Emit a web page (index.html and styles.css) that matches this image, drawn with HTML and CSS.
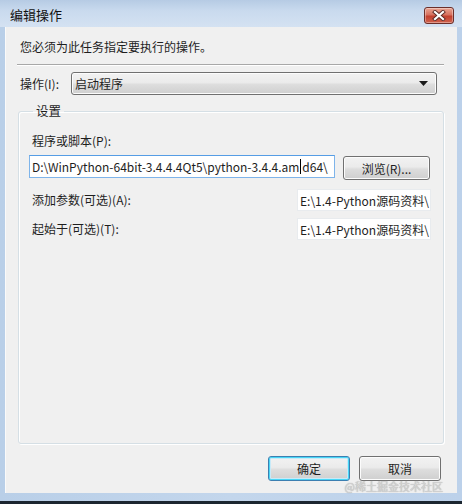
FILE: index.html
```html
<!DOCTYPE html>
<html lang="zh-CN">
<head>
<meta charset="utf-8">
<title>编辑操作</title>
<link rel="stylesheet" href="styles.css">
</head>
<body>
<div class="window">
  <div class="titlebar">
    <span class="title">编辑操作</span>
    <button class="close" aria-label="关闭">
      <svg width="14" height="11" viewBox="0 0 14 11">
        <path d="M3 2 L11 9 M11 2 L3 9" stroke="#5a2a26" stroke-width="4" stroke-linecap="square"/>
        <path d="M3 2 L11 9 M11 2 L3 9" stroke="#ffffff" stroke-width="2.2" stroke-linecap="square"/>
      </svg>
    </button>
  </div>
  <div class="client">
    <p class="intro">您必须为此任务指定要执行的操作。</p>
    <div class="sep"></div>
    <div class="op-row">
      <span class="op-label">操作(I):</span>
      <div class="select">
        <span>启动程序</span>
        <svg width="9" height="5" viewBox="0 0 9 5"><path d="M0 0 H9 L4.5 5 Z" fill="#1a1a1a"/></svg>
      </div>
    </div>
    <fieldset class="group">
      <legend>设置</legend>
      <div class="group-body">
        <div class="field-label">程序或脚本(P):</div>
        <div class="prog-row">
          <div class="input wide"><span>D:\WinPython-64bit-3.4.4.4Qt5\python-3.4.4.am</span><span class="caret"></span><span>d64\</span></div>
          <button class="btn browse">浏览(R)...</button>
        </div>
        <div class="arg-row first">
          <span class="field-label inline">添加参数(可选)(A):</span>
          <div class="input small">E:\1.4-Python源码资料\</div>
        </div>
        <div class="arg-row">
          <span class="field-label inline">起始于(可选)(T):</span>
          <div class="input small">E:\1.4-Python源码资料\</div>
        </div>
      </div>
    </fieldset>
    <div class="buttons">
      <button class="btn default">确定</button>
      <button class="btn">取消</button>
      <span class="watermark">@稀土掘金技术社区</span>
    </div>
  </div>
  <div class="taskbar"></div>
</div>
</body>
</html>
```
FILE: styles.css
```css
* { box-sizing: border-box; }
html, body {
  margin: 0;
  padding: 0;
}
body {
  width: 462px;
  height: 504px;
  overflow: hidden;
  background: #bfd3ea;
  font-family: "Noto Sans CJK SC", "Microsoft YaHei", sans-serif;
  font-size: 12px;
  color: #1e1e1e;
}
.window {
  height: 504px;
  display: flex;
  flex-direction: column;
  background: linear-gradient(90deg, #b9cfe8 0, #c3d6ec 50%, #bcd1ea 100%);
}
.titlebar {
  height: 27px;
  flex: none;
  display: flex;
  align-items: flex-start;
  justify-content: space-between;
  padding: 0 8px 0 10px;
  background: linear-gradient(180deg, #b6cbe4 0, #c9daee 40%, #d4e2f2 100%);
}
.title {
  font-size: 13px;
  line-height: 16px;
  margin-top: 7px;
  color: #111;
}
.close {
  margin-top: 7px;
  width: 30px;
  height: 17px;
  padding: 0;
  border: 1px solid #6b2f2a;
  border-radius: 3px;
  background: linear-gradient(180deg, #e9a593 0, #d7715f 45%, #c2402f 55%, #d0634e 100%);
  display: flex;
  align-items: center;
  justify-content: center;
  box-shadow: inset 0 0 0 1px rgba(255,255,255,0.35);
}
.client {
  flex: 1;
  margin: 0 5px 8px;
  background: #f0f0f0;
  display: flex;
  flex-direction: column;
  padding: 12px 13px 12px 12px;
  box-shadow: inset 1px 0 0 #fafafa;
}
.intro {
  margin: 0 0 0 3px;
  line-height: 16px;
}
.sep {
  margin-top: 9px;
  height: 1px;
  background: #a8a8a8;
  box-shadow: 0 1px 0 #ffffff;
}
.op-row {
  margin-top: 7px;
  display: flex;
  align-items: center;
}
.op-label {
  width: 54px;
  padding-left: 3px;
  line-height: 16px;
}
.select {
  width: 366px;
  height: 23px;
  border: 1px solid #707070;
  border-radius: 3px;
  background: linear-gradient(180deg, #f2f2f2 0, #ebebeb 45%, #dddddd 55%, #cfcfcf 100%);
  display: flex;
  align-items: center;
  justify-content: space-between;
  padding: 0 8px 0 3px;
  box-shadow: inset 0 0 0 1px #fcfcfc;
}
.group {
  margin: 8px 0 0 1px;
  flex: 1;
  border: 1px solid #d5dfe5;
  border-radius: 3px;
  box-shadow: inset 1px 1px 0 #ffffff, 1px 1px 0 #ffffff;
  padding: 0 12px 0 10px;
  min-width: 0;
}
.group legend {
  padding: 0 3px;
  margin-left: 4px;
  line-height: 16px;
  font-size: 12.5px;
}
.group-body {
  padding-top: 14px;
}
.field-label {
  padding-left: 3px;
  line-height: 16px;
}
.prog-row {
  margin-top: 6px;
  display: flex;
  align-items: flex-start;
}
.input {
  height: 23px;
  background: #ffffff;
  border: 1px solid #e3e9ef;
  border-top-color: #abadb3;
  padding: 0 2px;
  display: flex;
  align-items: center;
  white-space: nowrap;
  overflow: hidden;
  font-size: 12px;
}
.input.wide {
  width: 306px;
  border-color: #7eb4ea;
  border-top-color: #569de5;
}
.caret {
  flex: none;
  width: 1px;
  height: 15px;
  margin: 0 1px;
  background: #000;
}
.btn {
  font-family: inherit;
  font-size: 12px;
  color: #1e1e1e;
  border: 1px solid #707070;
  border-radius: 3px;
  background: linear-gradient(180deg, #f2f2f2 0, #ebebeb 45%, #dddddd 55%, #cfcfcf 100%);
  box-shadow: inset 0 0 0 1px #fcfcfc;
  padding: 0;
}
.browse {
  margin-left: 8px;
  margin-top: 1px;
  width: 87px;
  height: 24px;
}
.arg-row {
  display: flex;
  justify-content: space-between;
  align-items: center;
  margin-top: 7px;
}
.arg-row.first {
  margin-top: 9px;
}
.input.small {
  width: 134px;
  height: 22px;
  border-color: #e8ebee;
  justify-content: flex-start;
}
.buttons {
  position: relative;
  margin-top: 12px;
  display: flex;
  justify-content: flex-end;
  gap: 9px;
  padding-right: 3px;
}
.buttons .btn {
  width: 82px;
  height: 25px;
}
.btn.default {
  border-color: #3c7fb1;
  box-shadow: inset 0 0 0 1px #48d6f6, inset 0 0 0 2px #c8eaf8;
}
.watermark {
  position: absolute;
  right: 1px;
  top: 24px;
  font-size: 11px;
  line-height: 12px;
  color: #d4d4d4;
  text-shadow: 0 0 1px #9a9a9a;
}
.taskbar {
  flex: none;
  height: 3px;
  background: #1c2630;
}
```
